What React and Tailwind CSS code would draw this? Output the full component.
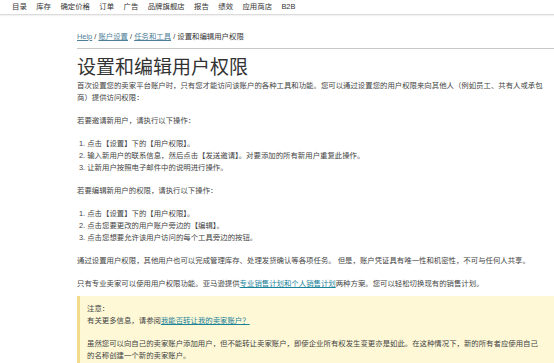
import React from "react";

const navItems = ["目录", "库存", "确定价格", "订单", "广告", "品牌旗舰店", "报告", "绩效", "应用商店", "B2B"];

const Link = ({ children }) => (
  <a href="#" className="text-[#1a8299] underline underline-offset-1">
    {children}
  </a>
);

const App = () => {
  return (
    <div
      className="w-[554px] h-[363px] overflow-hidden bg-white text-[#444] text-[7.4px] leading-[12px]"
      style={{ fontFamily: '"Liberation Sans", "Noto Sans CJK SC", sans-serif' }}
    >
      {/* Top navigation */}
      <div className="h-[15px] flex items-center gap-[9.4px] pl-[12px] border-b border-[#dcdcdc] shadow-[0_1px_1px_rgba(0,0,0,0.05)] text-[#333]">
        {navItems.map((item) => (
          <span key={item}>{item}</span>
        ))}
      </div>

      <div className="ml-[77px] pt-[16px]">
        {/* Breadcrumb */}
        <div className="pb-[5px] border-b border-[#c8c8c8] text-[#333]">
          <a href="#" className="text-[#4f7f98] underline">Help</a> /{" "}
          <a href="#" className="text-[#4f7f98] underline">账户设置</a> /{" "}
          <a href="#" className="text-[#4f7f98] underline">任务和工具</a> / 设置和编辑用户权限
        </div>

        <h1 className="mt-[7px] text-[19px] leading-[24px] font-normal text-[#333]">设置和编辑用户权限</h1>

        <div className="pr-[9px]">
          <p>
            首次设置您的卖家平台账户时，只有您才能访问该账户的各种工具和功能。您可以通过设置您的用户权限来向其他人（例如员工、共有人或承包商）提供访问权限：
          </p>

          <p className="mt-[11px]">若要邀请新用户，请执行以下操作：</p>
          <ol className="mt-[11px] pl-[2px]">
            <li>1. 点击【设置】下的【用户权限】。</li>
            <li>2. 输入新用户的联系信息，然后点击【发送邀请】。对要添加的所有新用户重复此操作。</li>
            <li>3. 让新用户按照电子邮件中的说明进行操作。</li>
          </ol>

          <p className="mt-[11px]">若要编辑新用户的权限，请执行以下操作：</p>
          <ol className="mt-[11px] pl-[2px]">
            <li>1. 点击【设置】下的【用户权限】。</li>
            <li>2. 点击您要更改的用户账户旁边的【编辑】。</li>
            <li>3. 点击您想要允许该用户访问的每个工具旁边的按钮。</li>
          </ol>

          <p className="mt-[11px]">
            通过设置用户权限，其他用户也可以完成管理库存、处理发货确认等各项任务。 但是，账户凭证具有唯一性和机密性，不可与任何人共享。
          </p>

          <p className="mt-[11px]">
            只有专业卖家可以使用用户权限功能。亚马逊提供<Link>专业销售计划和个人销售计划</Link>两种方案。您可以轻松切换现有的销售计划。
          </p>
        </div>

        {/* Note box */}
        <div className="mt-[6px] bg-[#fef8d6] border-l-[3px] border-[#f2dc8c] pl-[7px] pr-[12px] pt-[7px] pb-[10px]">
          <p>注意：</p>
          <p>
            有关更多信息，请参阅<Link>我能否转让我的卖家账户？</Link>
          </p>
          <p className="mt-[11px]">
            虽然您可以向自己的卖家账户添加用户，但不能转让卖家账户，即使企业所有权发生变更亦是如此。在这种情况下，新的所有者应使用自己的名称创建一个新的卖家账户。
          </p>
        </div>
      </div>
    </div>
  );
};

export default App;
